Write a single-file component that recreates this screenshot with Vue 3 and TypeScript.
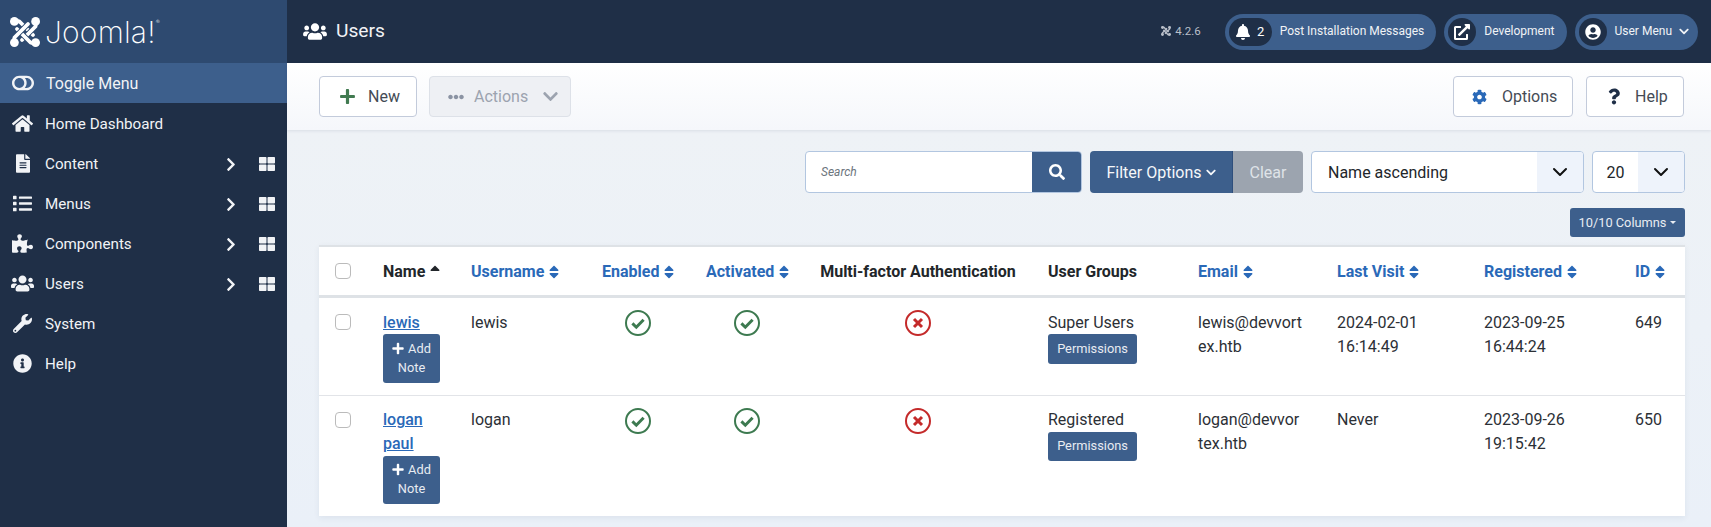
<script setup lang="ts">
import { h } from 'vue'

const icons: Record<string, [number, string]> = {
  users: [640, 'M96 224c35.3 0 64-28.7 64-64s-28.7-64-64-64-64 28.7-64 64 28.7 64 64 64zm448 0c35.3 0 64-28.7 64-64s-28.7-64-64-64-64 28.7-64 64 28.7 64 64 64zm32 32h-64c-17.6 0-33.5 7.1-45.1 18.6 40.3 22.1 68.9 62 75.1 109.4h66c17.7 0 32-14.3 32-32v-32c0-35.3-28.7-64-64-64zm-256 0c61.9 0 112-50.1 112-112S381.9 32 320 32 208 82.1 208 144s50.1 112 112 112zm76.8 32h-8.3c-20.8 10-43.9 16-68.5 16s-47.6-6-68.5-16h-8.3C179.6 288 128 339.6 128 403.2V432c0 26.5 21.5 48 48 48h288c26.5 0 48-21.5 48-48v-28.8c0-63.6-51.6-115.2-115.2-115.2zm-223.7-13.4C161.5 263.1 145.6 256 128 256H64c-35.3 0-64 28.7-64 64v32c0 17.7 14.3 32 32 32h65.9c6.3-47.4 34.9-87.3 75.2-109.4z'],
  home: [576, 'M280.37 148.26L96 300.11V464a16 16 0 0 0 16 16l112.06-.29a16 16 0 0 0 15.92-16V368a16 16 0 0 1 16-16h64a16 16 0 0 1 16 16v95.64a16 16 0 0 0 16 16.05L464 480a16 16 0 0 0 16-16V300L295.67 148.26a12.19 12.19 0 0 0-15.3 0zM571.6 251.47L488 182.56V44.05a12 12 0 0 0-12-12h-56a12 12 0 0 0-12 12v72.61L318.47 43a48 48 0 0 0-61 0L4.34 251.47a12 12 0 0 0-1.6 16.9l25.5 31A12 12 0 0 0 45.15 301l235.22-193.74a12.19 12.19 0 0 1 15.3 0L530.9 301a12 12 0 0 0 16.9-1.6l25.5-31a12 12 0 0 0-1.7-16.93z'],
  file: [384, 'M224 136V0H24C10.7 0 0 10.7 0 24v464c0 13.3 10.7 24 24 24h336c13.3 0 24-10.7 24-24V160H248c-13.2 0-24-10.8-24-24zm64 236c0 6.6-5.4 12-12 12H108c-6.6 0-12-5.4-12-12v-8c0-6.6 5.4-12 12-12h168c6.6 0 12 5.4 12 12v8zm0-64c0 6.6-5.4 12-12 12H108c-6.6 0-12-5.4-12-12v-8c0-6.6 5.4-12 12-12h168c6.6 0 12 5.4 12 12v8zm0-72v8c0 6.6-5.4 12-12 12H108c-6.6 0-12-5.4-12-12v-8c0-6.6 5.4-12 12-12h168c6.6 0 12 5.4 12 12zm96-114.1v6.1H256V0h6.1c6.4 0 12.5 2.5 17 7l97.9 98c4.5 4.5 7 10.6 7 16.9z'],
  list: [512, 'M80 368H16a16 16 0 0 0-16 16v64a16 16 0 0 0 16 16h64a16 16 0 0 0 16-16v-64a16 16 0 0 0-16-16zm0-320H16A16 16 0 0 0 0 64v64a16 16 0 0 0 16 16h64a16 16 0 0 0 16-16V64a16 16 0 0 0-16-16zm0 160H16a16 16 0 0 0-16 16v64a16 16 0 0 0 16 16h64a16 16 0 0 0 16-16v-64a16 16 0 0 0-16-16zm416 176H176a16 16 0 0 0-16 16v32a16 16 0 0 0 16 16h320a16 16 0 0 0 16-16v-32a16 16 0 0 0-16-16zm0-320H176a16 16 0 0 0-16 16v32a16 16 0 0 0 16 16h320a16 16 0 0 0 16-16V80a16 16 0 0 0-16-16zm0 160H176a16 16 0 0 0-16 16v32a16 16 0 0 0 16 16h320a16 16 0 0 0 16-16v-32a16 16 0 0 0-16-16z'],
  puzzle: [576, 'M519.442 288.651c-41.519 0-59.5 31.593-82.058 31.593C377.409 320.244 432 144 432 144s-196.288 80-196.288-3.297c0-35.827 36.288-46.25 36.288-85.985C272 19.216 243.885 0 210.539 0c-34.654 0-66.366 18.891-66.366 56.346 0 41.364 31.711 59.277 31.711 81.75C175.885 207.719 0 166.758 0 166.758v333.237s178.635 41.047 178.635-28.662c0-22.473-40-40.107-40-81.471 0-37.456 29.25-56.346 63.577-56.346 33.673 0 61.788 19.216 61.788 54.717 0 39.735-36.288 50.158-36.288 85.985 0 60.803 129.675 25.73 181.23 25.73 0 0-34.725-120.101 25.827-120.101 35.962 0 46.423 36.152 86.308 36.152C556.712 416 576 387.99 576 354.443c0-34.199-18.962-65.792-56.558-65.792z'],
  wrench: [512, 'M507.73 109.1c-2.24-9.03-13.54-12.09-20.12-5.51l-74.36 74.36-67.88-11.31-11.31-67.88 74.36-74.36c6.62-6.62 3.43-17.9-5.66-20.16-47.38-11.74-99.55.91-136.58 37.93-39.64 39.64-50.55 97.1-34.05 147.2L18.74 402.76c-24.99 24.99-24.99 65.51 0 90.5 24.99 24.99 65.51 24.99 90.5 0l213.21-213.21c50.12 16.71 107.47 5.68 147.37-34.22 37.07-37.07 49.7-89.32 37.91-136.73zM64 472c-13.25 0-24-10.75-24-24 0-13.26 10.75-24 24-24s24 10.74 24 24c0 13.25-10.75 24-24 24z'],
  info: [512, 'M256 8C119.043 8 8 119.083 8 256c0 136.997 111.043 248 248 248s248-111.003 248-248C504 119.083 392.957 8 256 8zm0 110c23.196 0 42 18.804 42 42s-18.804 42-42 42-42-18.804-42-42 18.804-42 42-42zm56 254c0 6.627-5.373 12-12 12h-88c-6.627 0-12-5.373-12-12v-24c0-6.627 5.373-12 12-12h12v-64h-12c-6.627 0-12-5.373-12-12v-24c0-6.627 5.373-12 12-12h64c6.627 0 12 5.373 12 12v100h12c6.627 0 12 5.373 12 12v24z'],
  bell: [448, 'M224 512c35.32 0 63.97-28.65 63.97-64H160.03c0 35.35 28.65 64 63.97 64zm215.39-149.71c-19.32-20.76-55.47-51.99-55.47-154.29 0-77.7-54.48-139.9-127.94-155.16V32c0-17.67-14.32-32-31.98-32s-31.98 14.33-31.98 32v20.84C118.56 68.1 64.08 130.3 64.08 208c0 102.3-36.15 133.53-55.47 154.29-6 6.45-8.66 14.16-8.61 21.71.11 16.4 12.98 32 32.1 32h383.8c19.12 0 32-15.6 32.1-32 .05-7.55-2.61-15.27-8.61-21.71z'],
  ext: [512, 'M432,320H400a16,16,0,0,0-16,16V448H64V128H208a16,16,0,0,0,16-16V80a16,16,0,0,0-16-16H48A48,48,0,0,0,0,112V464a48,48,0,0,0,48,48H400a48,48,0,0,0,48-48V336A16,16,0,0,0,432,320ZM488,0h-128c-21.37,0-32.05,25.91-17,41l35.73,35.73L135,320.37a24,24,0,0,0,0,34L157.67,377a24,24,0,0,0,34,0L435.28,133.32,471,169c15,15,41,4.5,41-17V24A24,24,0,0,0,488,0Z'],
  user: [496, 'M248 8C111 8 0 119 0 256s111 248 248 248 248-111 248-248S385 8 248 8zm0 96c48.6 0 88 39.4 88 88s-39.4 88-88 88-88-39.4-88-88 39.4-88 88-88zm0 344c-58.7 0-111.3-26.6-146.5-68.2 18.8-35.4 55.6-59.8 98.5-59.8 2.4 0 4.8.4 7.1 1.1 13 4.2 26.6 6.9 40.9 6.9 14.3 0 28-2.7 40.9-6.9 2.3-.7 4.7-1.1 7.1-1.1 42.9 0 79.7 24.4 98.5 59.8C359.3 421.4 306.7 448 248 448z'],
  cog: [512, 'M487.4 315.7l-42.6-24.6c4.3-23.2 4.3-47 0-70.2l42.6-24.6c4.9-2.8 7.1-8.6 5.5-14-11.1-35.6-30-67.8-54.7-94.6-3.8-4.1-10-5.1-14.8-2.3L380.8 110c-17.9-15.4-38.5-27.3-60.8-35.1V25.8c0-5.6-3.9-10.5-9.4-11.7-36.7-8.2-74.3-7.8-109.2 0-5.5 1.2-9.4 6.1-9.4 11.7V75c-22.2 7.9-42.8 19.8-60.8 35.1L88.7 85.5c-4.9-2.8-11-1.9-14.8 2.3-24.7 26.7-43.6 58.9-54.7 94.6-1.7 5.4.6 11.2 5.5 14L67.3 221c-4.3 23.2-4.3 47 0 70.2l-42.6 24.6c-4.9 2.8-7.1 8.6-5.5 14 11.1 35.6 30 67.8 54.7 94.6 3.8 4.1 10 5.1 14.8 2.3l42.6-24.6c17.9 15.4 38.5 27.3 60.8 35.1v49.2c0 5.6 3.9 10.5 9.4 11.7 36.7 8.2 74.3 7.8 109.2 0 5.5-1.2 9.4-6.1 9.4-11.7v-49.2c22.2-7.9 42.8-19.8 60.8-35.1l42.6 24.6c4.9 2.8 11 1.9 14.8-2.3 24.7-26.7 43.6-58.9 54.7-94.6 1.5-5.5-.7-11.3-5.6-14.1zM256 336c-44.1 0-80-35.9-80-80s35.9-80 80-80 80 35.9 80 80-35.9 80-80 80z'],
  question: [384, 'M202.021 0C122.202 0 70.503 32.703 29.914 91.026c-7.363 10.58-5.093 25.086 5.178 32.874l43.138 32.709c10.373 7.865 25.132 6.026 33.253-4.148 25.049-31.381 43.63-49.449 82.757-49.449 30.764 0 68.816 19.799 68.816 49.631 0 22.552-18.617 34.134-48.993 51.164-35.423 19.86-82.299 44.576-82.299 106.405V320c0 13.255 10.745 24 24 24h72.471c13.255 0 24-10.745 24-24v-5.773c0-42.86 125.268-44.645 125.268-160.627C377.504 66.256 286.902 0 202.021 0zM192 373.459c-38.196 0-69.271 31.075-69.271 69.271 0 38.195 31.075 69.27 69.271 69.27s69.271-31.075 69.271-69.271-31.075-69.27-69.271-69.27z'],
  search: [512, 'M505 442.7L405.3 343c-4.5-4.5-10.6-7-17-7H372c27.6-35.3 44-79.7 44-128C416 93.1 322.9 0 208 0S0 93.1 0 208s93.1 208 208 208c48.3 0 92.7-16.4 128-44v16.3c0 6.4 2.5 12.5 7 17l99.7 99.7c9.4 9.4 24.6 9.4 33.9 0l28.3-28.3c9.4-9.4 9.4-24.6.1-34zM208 336c-70.7 0-128-57.2-128-128 0-70.7 57.2-128 128-128 70.7 0 128 57.2 128 128 0 70.7-57.2 128-128 128z'],
  plus: [448, 'M416 208H272V64c0-17.67-14.33-32-32-32h-32c-17.67 0-32 14.33-32 32v144H32c-17.67 0-32 14.33-32 32v32c0 17.67 14.33 32 32 32h144v144c0 17.67 14.33 32 32 32h32c17.67 0 32-14.33 32-32V304h144c17.67 0 32-14.33 32-32v-32c0-17.67-14.33-32-32-32z'],
  dots: [512, 'M328 256c0 39.8-32.2 72-72 72s-72-32.2-72-72 32.2-72 72-72 72 32.2 72 72zm104-72c-39.8 0-72 32.2-72 72s32.2 72 72 72 72-32.2 72-72-32.2-72-72-72zm-352 0c-39.8 0-72 32.2-72 72s32.2 72 72 72 72-32.2 72-72-32.2-72-72-72z'],
  down: [448, 'M207.029 381.476L12.686 187.132c-9.373-9.373-9.373-24.569 0-33.941l22.667-22.667c9.357-9.357 24.522-9.375 33.901-.04L224 284.505l154.745-154.021c9.379-9.335 24.544-9.317 33.901.04l22.667 22.667c9.373 9.373 9.373 24.569 0 33.941L240.971 381.476c-9.373 9.372-24.569 9.372-33.942 0z'],
  toggle: [576, 'M384 64H192C86 64 0 150 0 256s86 192 192 192h192c106 0 192-86 192-192S490 64 384 64zM64 256c0-70.7 57.3-128 128-128 70.7 0 128 57.3 128 128 0 70.8-57.3 128-128 128-70.7 0-128-57.3-128-128zm320 128h-48.9c65.2-72.6 65.1-183.5 0-256H384c70.7 0 128 57.3 128 128 0 70.8-57.3 128-128 128z'],
  grid: [512, 'M296 32h192c13.255 0 24 10.745 24 24v160c0 13.255-10.745 24-24 24H296c-13.255 0-24-10.745-24-24V56c0-13.255 10.745-24 24-24zm-80 0H24C10.745 32 0 42.745 0 56v160c0 13.255 10.745 24 24 24h192c13.255 0 24-10.745 24-24V56c0-13.255-10.745-24-24-24zM0 296v160c0 13.255 10.745 24 24 24h192c13.255 0 24-10.745 24-24V296c0-13.255-10.745-24-24-24H24c-13.255 0-24 10.745-24 24zm296 184h192c13.255 0 24-10.745 24-24V296c0-13.255-10.745-24-24-24H296c-13.255 0-24 10.745-24 24v160c0 13.255 10.745 24 24 24z'],
  sort: [320, 'M41 288h238c21.4 0 32.1 25.9 17 41L177 448c-9.4 9.4-24.6 9.4-33.9 0L24 329c-15.1-15.1-4.4-41 17-41zm255-105L177 64c-9.4-9.4-24.6-9.4-33.9 0L24 183c-15.1 15.1-4.4 41 17 41h238c21.4 0 32.1-25.9 17-41z'],
  sortup: [320, 'M279 224H41c-21.4 0-32.1-25.9-17-41L143 64c9.4-9.4 24.6-9.4 33.9 0l119 119c15.2 15.1 4.5 41-16.9 41z'],
  right: [320, 'M285.476 272.971L91.132 467.314c-9.373 9.373-24.569 9.373-33.941 0l-22.667-22.667c-9.357-9.357-9.375-24.522-.04-33.901L188.505 256 34.484 101.255c-9.335-9.379-9.317-24.544.04-33.901l22.667-22.667c9.373-9.373 24.569-9.373 33.941 0L285.475 239.03c9.373 9.372 9.373 24.568.001 33.941z'],
}

const Ico = (props: { n: string }) =>
  h('svg', { viewBox: `0 0 ${icons[props.n][0]} 512`, class: 'ico' }, [
    h('path', { d: icons[props.n][1], fill: 'currentColor' }),
  ])
Ico.props = ['n']

const menu = [
  { label: 'Home Dashboard', icon: 'home', more: false },
  { label: 'Content', icon: 'file', more: true },
  { label: 'Menus', icon: 'list', more: true },
  { label: 'Components', icon: 'puzzle', more: true },
  { label: 'Users', icon: 'users', more: true },
  { label: 'System', icon: 'wrench', more: false },
  { label: 'Help', icon: 'info', more: false },
]

const rot = [0, 90, 180, 270]
const band = 'M4.5 4.5 Q7 3.5 9.5 4.5 L23 18'

const columns = [
  { label: 'Name', kind: 'active', cls: '' },
  { label: 'Username', kind: 'sort', cls: '' },
  { label: 'Enabled', kind: 'sort', cls: 'ctr' },
  { label: 'Activated', kind: 'sort', cls: 'ctr act' },
  { label: 'Multi-factor Authentication', kind: 'plain', cls: 'ctr' },
  { label: 'User Groups', kind: 'plain', cls: '' },
  { label: 'Email', kind: 'sort', cls: '' },
  { label: 'Last Visit', kind: 'sort', cls: '' },
  { label: 'Registered', kind: 'sort', cls: '' },
  { label: 'ID', kind: 'sort', cls: '' },
]
const widths = [52, 88, 131, 96, 114, 236, 150, 139, 147, 151, 62]

const rows = [
  { name: 'lewis', user: 'lewis', group: 'Super Users', email: 'lewis@devvortex.htb', last: '2024-02-01 16:14:49', reg: '2023-09-25 16:44:24', id: 649 },
  { name: 'logan paul', user: 'logan', group: 'Registered', email: 'logan@devvortex.htb', last: 'Never', reg: '2023-09-26 19:15:42', id: 650 },
]
</script>

<template>
  <div class="app">
    <aside class="side">
      <div class="brand">
        <svg class="mark" viewBox="0 0 30 30">
          <g v-for="r in rot" :key="r" :transform="`rotate(${r} 15 15)`">
            <path :d="band" fill="none" stroke="#2e4a70" stroke-width="5.4" />
            <path :d="band" fill="none" stroke="#fff" stroke-width="3.8" stroke-linecap="round" />
            <circle cx="4.4" cy="4.4" r="4.4" fill="#fff" />
          </g>
        </svg>
        <span class="word">Joomla!<sup>®</sup></span>
      </div>
      <div class="item toggle"><span class="ic"><Ico n="toggle" class="i-toggle" /></span><span class="lbl">Toggle Menu</span></div>
      <div v-for="m in menu" :key="m.label" class="item">
        <span class="ic"><Ico :n="m.icon" :class="'i-' + m.icon" /></span>
        <span class="lbl">{{ m.label }}</span>
        <template v-if="m.more">
          <Ico n="right" class="i-right" />
          <Ico n="grid" class="i-grid" />
        </template>
      </div>
    </aside>

    <div class="main">
      <header class="top">
        <Ico n="users" class="i-title" />
        <h1>Users</h1>
        <div class="top-right">
          <span class="ver">
            <svg class="mini" viewBox="0 0 30 30">
              <g v-for="r in rot" :key="r" :transform="`rotate(${r} 15 15)`">
                <path :d="band" fill="none" stroke="#b9bfc9" stroke-width="4.4" />
                <circle cx="4.4" cy="4.4" r="4.4" fill="#b9bfc9" />
              </g>
            </svg>4.2.6
          </span>
          <div class="pill">
            <span class="badge wide"><Ico n="bell" class="i-bell" /><b>2</b></span>
            <span class="ptext">Post Installation Messages</span>
          </div>
          <div class="pill">
            <span class="badge"><Ico n="ext" class="i-ext" /></span>
            <span class="ptext">Development</span>
          </div>
          <div class="pill">
            <span class="badge"><Ico n="user" class="i-user" /></span>
            <span class="ptext">User Menu</span>
            <Ico n="down" class="i-pill-down" />
          </div>
        </div>
      </header>

      <section class="toolbar">
        <button class="tb tb-new"><Ico n="plus" class="i-plus" />New</button>
        <button class="tb tb-actions"><Ico n="dots" class="i-dots" />Actions<Ico n="down" class="i-act-down" /></button>
        <span class="spring"></span>
        <button class="tb tb-options"><Ico n="cog" class="i-cog" />Options</button>
        <button class="tb tb-help"><Ico n="question" class="i-q" />Help</button>
      </section>

      <section class="content">
        <div class="filters">
          <div class="search">
            <span class="ph">Search</span>
            <span class="s-btn"><Ico n="search" class="i-search" /></span>
          </div>
          <div class="fgroup">
            <span class="f-opt">Filter Options<Ico n="down" class="i-f-down" /></span>
            <span class="f-clear">Clear</span>
          </div>
          <div class="sel sel-a"><span class="sel-t">Name ascending</span><span class="arrow"><svg viewBox="0 0 16 16"><path d="M2 5l6 6 6-6" fill="none" stroke="#111" stroke-width="2" stroke-linecap="round" stroke-linejoin="round" /></svg></span></div>
          <div class="sel sel-b"><span class="sel-t">20</span><span class="arrow"><svg viewBox="0 0 16 16"><path d="M2 5l6 6 6-6" fill="none" stroke="#111" stroke-width="2" stroke-linecap="round" stroke-linejoin="round" /></svg></span></div>
        </div>
        <div class="colrow"><span class="colbtn">10/10 Columns<i class="caret"></i></span></div>

        <div class="card">
          <table>
            <colgroup><col v-for="(w, i) in widths" :key="i" :style="{ width: w + 'px' }" /></colgroup>
            <thead>
              <tr>
                <th class="chk"><span class="box"></span></th>
                <th v-for="c in columns" :key="c.label" :class="c.cls">
                  <span v-if="c.kind === 'sort'" class="sortlink">{{ c.label }}<Ico n="sort" class="i-sort" /></span>
                  <span v-else-if="c.kind === 'active'">{{ c.label }}<Ico n="sortup" class="i-sort i-up" /></span>
                  <span v-else>{{ c.label }}</span>
                </th>
              </tr>
            </thead>
            <tbody>
              <tr v-for="r in rows" :key="r.id">
                <td class="chk"><span class="box"></span></td>
                <td>
                  <a class="uname">{{ r.name }}</a>
                  <span class="btn note"><Ico n="plus" class="i-note" />Add Note</span>
                </td>
                <td>{{ r.user }}</td>
                <td class="ctr">
                  <svg class="state ok" viewBox="0 0 26 26"><circle cx="13" cy="13" r="12" fill="none" stroke="currentColor" stroke-width="2" /><path d="M7.4 13.4l3.9 3.8 7.3-7.5" fill="none" stroke="currentColor" stroke-width="3" /></svg>
                </td>
                <td class="ctr act">
                  <svg class="state ok" viewBox="0 0 26 26"><circle cx="13" cy="13" r="12" fill="none" stroke="currentColor" stroke-width="2" /><path d="M7.4 13.4l3.9 3.8 7.3-7.5" fill="none" stroke="currentColor" stroke-width="3" /></svg>
                </td>
                <td class="ctr">
                  <svg class="state no" viewBox="0 0 26 26"><circle cx="13" cy="13" r="12" fill="none" stroke="currentColor" stroke-width="2" /><path d="M9 9l8 8M17 9l-8 8" fill="none" stroke="currentColor" stroke-width="3" /></svg>
                </td>
                <td>{{ r.group }}<span class="btn perm">Permissions</span></td>
                <td class="brk">{{ r.email }}</td>
                <td>{{ r.last }}</td>
                <td>{{ r.reg }}</td>
                <td>{{ r.id }}</td>
              </tr>
            </tbody>
          </table>
        </div>
      </section>
    </div>
  </div>
</template>

<style>
html, body { margin: 0; height: 100%; overflow: hidden; background: #ecf1f7; }
</style>

<style scoped>
.app {
  display: grid;
  grid-template-columns: 287px 1fr;
  height: 527px;
  font-family: Roboto, "Liberation Sans", sans-serif;
  font-size: 16px;
  color: #22262a;
  overflow: hidden;
}
.ico { display: block; flex: none; }

/* sidebar */
.side { background: #1f2f47; color: #f1f3f6; }
.brand { height: 63px; background: #2e4a70; display: flex; align-items: center; padding-left: 10px; box-sizing: border-box; }
.mark { width: 30px; height: 30px; overflow: visible; flex: none; }
.word { font-family: Inter, Lato, sans-serif; font-weight: 200; font-size: 30px; line-height: 1; color: #fff; margin-left: 5px; letter-spacing: 0.2px; position: relative; }
.word sup { font-size: 6px; position: absolute; top: 2px; margin-left: 0; }
.item { height: 40px; box-sizing: border-box; padding-top: 2px; display: flex; align-items: center; font-size: 15.2px; }
.item.toggle { background: #3d5f8c; font-size: 16px; padding-top: 0; }
.toggle .lbl { margin-left: 1px; }
.ic { width: 45px; flex: none; display: flex; justify-content: center; margin-top: -2px; }
.toggle .ic { margin-top: 0; }
.lbl { flex: 1; }
.i-toggle { width: 22px; height: 20px; }
.i-home { width: 21px; height: 19px; }
.i-file { width: 14px; height: 19px; }
.i-list { width: 19px; height: 19px; }
.i-puzzle { width: 21px; height: 19px; }
.i-users { width: 23px; height: 19px; }
.i-wrench { width: 19px; height: 19px; }
.i-info { width: 19px; height: 19px; }
.i-right { width: 10px; height: 15px; margin-right: 23px; }
.i-grid { width: 16px; height: 16px; margin-right: 12px; }

/* header */
.main { display: flex; flex-direction: column; min-width: 0; }
.top { height: 63px; background: #1f2f47; color: #fff; display: flex; align-items: center; padding: 0 13px 0 16px; box-sizing: border-box; flex: none; }
.i-title { width: 24px; height: 19px; margin-right: 9px; }
h1 { font-size: 19.2px; font-weight: 400; margin: 0 0 2px; flex: 1; color: #f1f3f6; }
.top-right { display: flex; align-items: center; gap: 8px; }
.ver { display: flex; align-items: center; gap: 4px; color: #b9bfc9; font-size: 11.5px; margin-right: 16px; padding-bottom: 1px; }
.mini { width: 10px; height: 10px; }
.pill { height: 36px; background: #3d5f8c; border-radius: 18px; display: flex; align-items: center; padding: 0 4px; box-sizing: border-box; color: #f1f3f6; }
.badge { height: 28px; min-width: 28px; width: 28px; border-radius: 14px; background: #1f2f47; display: flex; align-items: center; justify-content: center; gap: 7px; color: #fff; }
.badge.wide { width: 43px; }
.badge b { font-weight: 400; font-size: 13px; }
.ptext { font-size: 12px; margin: 0 8px; padding-bottom: 2px; }
.i-bell { width: 14px; height: 16px; }
.i-ext { width: 16px; height: 16px; }
.i-user { width: 16px; height: 16px; }
.i-pill-down { width: 10px; height: 11px; margin: 0 5px 0 -1px; }

/* toolbar */
.toolbar { height: 67px; box-sizing: border-box; flex: none; display: flex; align-items: flex-start; padding: 13px 27px 0 32px; background: linear-gradient(#fff, #f5f7fb); box-shadow: 0 1px 3px rgba(30, 50, 90, 0.1); position: relative; }
.spring { flex: 1; }
.tb { height: 41px; box-sizing: border-box; background: #fff; border: 1px solid #c3cbdb; border-radius: 4px; font: 400 16px Roboto, sans-serif; color: #444b55; display: flex; align-items: center; padding: 0; }
.tb-new { width: 98px; margin-right: 12px; padding-left: 20px; }
.i-plus { width: 15px; height: 17px; color: #417a50; margin-right: 13px; }
.tb-actions { width: 142px; background: #eef0f4; border-color: #dde1e8; color: #9ca3af; padding-left: 18px; }
.i-dots { width: 16px; height: 16px; color: #8b93a3; margin-right: 10px; }
.i-act-down { width: 15px; height: 17px; color: #9ca3af; margin-left: 15px; }
.tb-options { width: 120px; margin-right: 13px; padding-left: 18px; }
.i-cog { width: 15px; height: 16px; color: #2a69b8; margin-right: 15px; }
.tb-help { width: 98px; padding-left: 21px; }
.i-q { width: 12px; height: 17px; color: #1f2f47; margin-right: 15px; }

/* filters */
.content { padding: 21px 26px 0 32px; flex: 1; background: linear-gradient(#eef2f6, #eaf0f8); }
.filters { display: flex; justify-content: flex-end; height: 42px; }
.search { width: 277px; margin-right: 8px; display: flex; align-items: stretch; background: #fff; border: 1px solid #b2c6e0; border-radius: 4px; box-sizing: border-box; overflow: hidden; }
.ph { flex: 1; font-style: italic; font-size: 12px; color: #6c757d; align-self: center; padding-left: 15px; }
.s-btn { width: 50px; background: #3d5f8c; color: #fff; display: flex; align-items: center; justify-content: center; margin: -1px -1px -1px 0; }
.i-search { width: 16px; height: 16px; }
.fgroup { display: flex; margin-right: 8px; }
.f-opt { width: 143px; box-sizing: border-box; background: #3d5f8c; color: #f5f7fa; border-radius: 4px 0 0 4px; display: flex; align-items: center; justify-content: center; gap: 4px; border-right: 1px solid #2f4f7c; }
.i-f-down { width: 10px; height: 11px; }
.f-clear { width: 70px; background: #9ca4af; color: #dfe3e8; border-radius: 0 4px 4px 0; display: flex; align-items: center; justify-content: center; }
.sel { display: flex; background: #fff; border: 1px solid #b2c6e0; border-radius: 4px; box-sizing: border-box; overflow: hidden; align-items: stretch; color: #22262a; }
.sel-a { width: 273px; margin-right: 8px; }
.sel-b { width: 93px; }
.sel-t { flex: 1; align-self: center; padding-left: 16px; }
.sel-b .sel-t { padding-left: 0; text-align: center; }
.arrow { width: 46px; background: #eef3fb; display: flex; align-items: center; justify-content: center; }
.arrow svg { width: 16px; height: 16px; }
.colrow { display: flex; justify-content: flex-end; margin-top: 15px; }
.colbtn { height: 29px; width: 115px; background: #3d5f8c; color: #e8ecf2; border-radius: 3px; font-size: 12.8px; display: flex; align-items: center; justify-content: center; }
.caret { width: 0; height: 0; border: 3.5px solid transparent; border-top-color: #e8ecf2; border-bottom: 0; margin-left: 4px; }

/* table */
.card { margin-top: 8px; background: #fff; box-shadow: 0 2px 6px rgba(30, 50, 90, 0.07); }
table { width: 100%; table-layout: fixed; border-collapse: separate; border-spacing: 0; line-height: 24px; }
th { padding: 13px 12px 11px; text-align: left; font-weight: 700; font-size: 16px; border-top: 2px solid #dee2e6; border-bottom: 3px solid #dee2e6; white-space: nowrap; color: #22262a; }
th > span { display: inline-flex; align-items: center; }
td { padding: 12px; vertical-align: top; font-size: 16px; color: #2c3036; border-bottom: 1px solid #e2e4e8; }
tbody tr:first-child td { padding-top: 13px; }
tbody tr:last-child td { border-bottom: 0; }
.ctr { text-align: center; }
.act { padding-left: 20px; }
th.chk { padding: 16px 0 16px 16px; }
td.chk, tbody tr:first-child td.chk { padding: 16px 0 0 16px; }
.box { display: block; width: 16px; height: 16px; box-sizing: border-box; border: 1px solid #bbb; border-radius: 4px; background: #fff; }
.sortlink { color: #2a69b8; }
.i-sort { width: 10px; height: 16px; margin-left: 5px; }
.i-up { color: #22262a; }
.uname { display: block; color: #2a69b8; font-weight: 500; text-decoration: underline; }
.btn { display: block; background: #3d5f8c; color: #e8ecf2; font-size: 12.8px; line-height: 19.2px; border-radius: 3px; text-align: center; box-sizing: border-box; }
tbody tr:first-child .btn { margin-top: -1px; }
.note { width: 57px; height: 48px; padding: 4px 4px 0; }
tbody tr:first-child .note { height: 49px; padding-top: 5px; }
.i-note { display: inline-block; width: 12px; height: 13px; margin-right: 4px; vertical-align: -2px; color: #fff; }
.perm { width: 89px; height: 29px; line-height: 27px; }
tbody tr:first-child .perm { height: 30px; line-height: 30px; }
.brk { word-break: break-all; padding-right: 21px; }
.state { display: block; width: 26px; height: 26px; margin: 0 auto; }
tbody tr:first-child .state { margin-top: -1px; }
.ok { color: #3d7a50; }
.no { color: #c42a2a; }
</style>
